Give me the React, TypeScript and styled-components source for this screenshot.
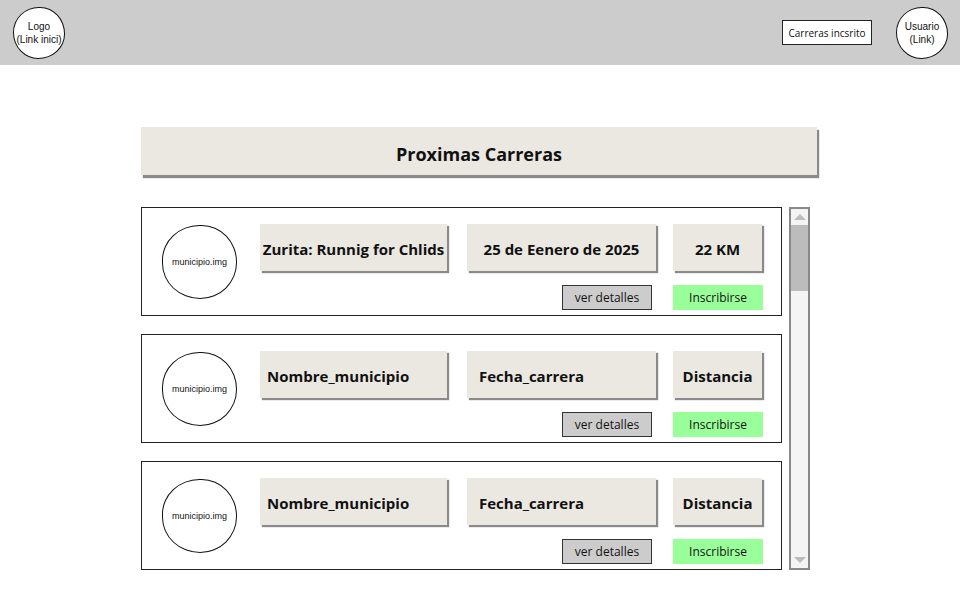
import React from "react";
import styled, { createGlobalStyle } from "styled-components";

const Global = createGlobalStyle`
  html, body { margin: 0; padding: 0; background: #ffffff; }
  body { font-family: "Open Sans", "Liberation Sans", sans-serif; color: #111; }
  * { box-sizing: border-box; }
`;

const Header = styled.header`
  height: 65px;
  background: #cccccc;
  display: flex;
  align-items: center;
  justify-content: space-between;
  padding: 0 12px 0 13px;
`;

const RightGroup = styled.div`
  display: flex;
  align-items: center;
  gap: 24px;
`;

const CircleLink = styled.a`
  width: 52px;
  height: 52px;
  border: 1px solid #111;
  border-radius: 50% 48% 52% 49% / 49% 52% 48% 51%;
  background: #fff;
  display: flex;
  align-items: center;
  justify-content: center;
  text-align: center;
  font-family: "Liberation Sans", Arial, sans-serif;
  font-size: 10px;
  line-height: 13px;
  color: #111;
  text-decoration: none;
  white-space: nowrap;
`;

const NavButton = styled.a`
  width: 90px;
  height: 25px;
  border: 1px solid #222;
  background: #fff;
  display: flex;
  align-items: center;
  justify-content: center;
  font-size: 10px;
  color: #111;
  text-decoration: none;
`;

const Main = styled.main`
  width: 676px;
  margin: 62px 0 0 141px;
`;

const TitleBar = styled.h1`
  margin: 0;
  height: 48px;
  padding-top: 6px;
  background: #ebe8e2;
  box-shadow: 2px 3px 1px #8a8a8a;
  display: flex;
  align-items: center;
  justify-content: center;
  font-size: 18px;
  font-weight: 700;
  color: #111;
`;

const ListRow = styled.div`
  margin-top: 32px;
  display: flex;
  gap: 7px;
`;

const Cards = styled.div`
  width: 641px;
  display: flex;
  flex-direction: column;
  gap: 18px;
`;

const Card = styled.section`
  height: 109px;
  border: 1px solid #222;
  display: flex;
  align-items: center;
  gap: 23px;
  padding: 0 19px 0 20px;
`;

const ImgCircle = styled.div`
  width: 75px;
  height: 74px;
  flex: none;
  border: 1px solid #111;
  border-radius: 51% 48% 50% 52% / 48% 51% 50% 49%;
  display: flex;
  align-items: center;
  justify-content: center;
  font-family: "Liberation Sans", Arial, sans-serif;
  font-size: 9px;
  color: #111;
`;

const Content = styled.div`
  display: flex;
  flex-direction: column;
  padding-top: 10px;
`;

const InfoRow = styled.div`
  display: flex;
`;

const InfoBox = styled.div<{ $w: number; $ml: number; $align: "left" | "center"; $pl: number }>`
  width: ${(p) => p.$w}px;
  margin-left: ${(p) => p.$ml}px;
  height: 47px;
  background: #ebe8e2;
  box-shadow: 2px 2px 1px #8a8a8a;
  display: flex;
  align-items: center;
  justify-content: ${(p) => (p.$align === "center" ? "center" : "flex-start")};
  padding-left: ${(p) => p.$pl}px;
  padding-top: 4px;
  font-size: 15px;
  font-weight: 700;
  white-space: nowrap;
  color: #111;
`;

const Actions = styled.div`
  margin-top: 14px;
  display: flex;
  justify-content: flex-end;
  gap: 21px;
  margin-right: -1px;
`;

const ActionButton = styled.button<{ $primary?: boolean }>`
  width: 90px;
  height: 25px;
  margin: 0;
  padding: 0;
  font-family: inherit;
  font-size: 12px;
  color: #111;
  background: ${(p) => (p.$primary ? "#99ff99" : "#cccccc")};
  border: ${(p) => (p.$primary ? "none" : "1px solid #333")};
  cursor: pointer;
`;

const Scrollbar = styled.div`
  width: 21px;
  border: 2px solid #888;
  background: #f4f4f4;
  display: flex;
  flex-direction: column;
  align-items: center;
`;

const Arrow = styled.div<{ $down?: boolean }>`
  width: 17px;
  height: 16px;
  display: flex;
  align-items: center;
  justify-content: center;
  &::before {
    content: "";
    border-left: 6px solid transparent;
    border-right: 6px solid transparent;
    ${(p) => (p.$down ? "border-top: 6px solid #bcbcbc;" : "border-bottom: 6px solid #bcbcbc;")}
  }
`;

const Thumb = styled.div`
  width: 17px;
  height: 66px;
  background: #bcbcbc;
`;

const Track = styled.div`
  flex: 1;
`;

type Race = {
  name: string;
  date: string;
  dist: string;
  nameAlign: "left" | "center";
  namePad: number;
  dateAlign: "left" | "center";
  datePad: number;
};

const races: Race[] = [
  { name: "Zurita: Runnig for Chlids", date: "25 de Eenero de 2025", dist: "22 KM", nameAlign: "center", namePad: 0, dateAlign: "center", datePad: 0 },
  { name: "Nombre_municipio", date: "Fecha_carrera", dist: "Distancia", nameAlign: "left", namePad: 7, dateAlign: "left", datePad: 12 },
  { name: "Nombre_municipio", date: "Fecha_carrera", dist: "Distancia", nameAlign: "left", namePad: 7, dateAlign: "left", datePad: 12 },
];

export default function App() {
  return (
    <>
      <Global />
      <Header>
        <CircleLink href="#">
          Logo
          <br />
          (Link inici)
        </CircleLink>
        <RightGroup>
          <NavButton href="#">Carreras incsrito</NavButton>
          <CircleLink href="#">
            Usuario
            <br />
            (Link)
          </CircleLink>
        </RightGroup>
      </Header>
      <Main>
        <TitleBar>Proximas Carreras</TitleBar>
        <ListRow>
          <Cards>
            {races.map((r, i) => (
              <Card key={i}>
                <ImgCircle>municipio.img</ImgCircle>
                <Content>
                  <InfoRow>
                    <InfoBox $w={187} $ml={0} $align={r.nameAlign} $pl={r.namePad}>{r.name}</InfoBox>
                    <InfoBox $w={189} $ml={20} $align={r.dateAlign} $pl={r.datePad}>{r.date}</InfoBox>
                    <InfoBox $w={89} $ml={17} $align="center" $pl={0}>{r.dist}</InfoBox>
                  </InfoRow>
                  <Actions>
                    <ActionButton>ver detalles</ActionButton>
                    <ActionButton $primary>Inscribirse</ActionButton>
                  </Actions>
                </Content>
              </Card>
            ))}
          </Cards>
          <Scrollbar>
            <Arrow />
            <Thumb />
            <Track />
            <Arrow $down />
          </Scrollbar>
        </ListRow>
      </Main>
    </>
  );
}
